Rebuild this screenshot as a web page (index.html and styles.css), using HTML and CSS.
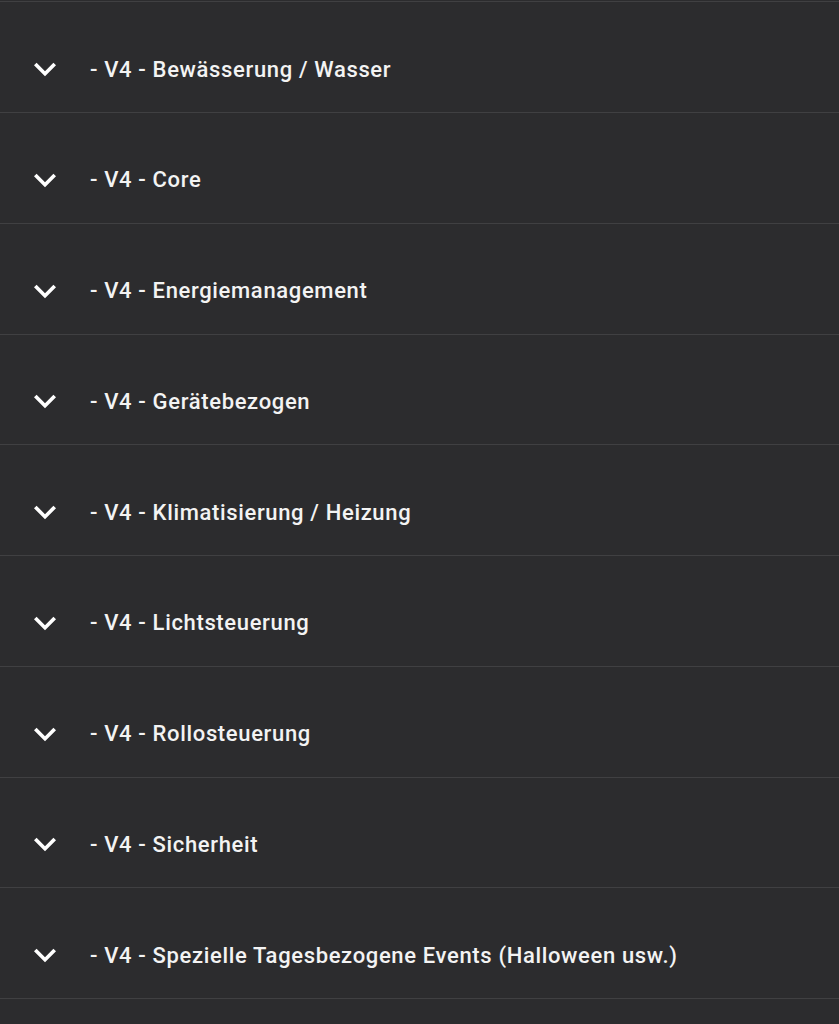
FILE: index.html
```html
<!DOCTYPE html>
<html lang="de">
<head>
<meta charset="utf-8">
<link rel="stylesheet" href="styles.css">
<title>V4</title>
</head>
<body>
<div class="list">
  <div class="row"><div class="head"><svg class="chev" viewBox="0 0 24 24"><path d="M16.59 8.59L12 13.17 7.41 8.59 6 10l6 6 6-6z"/></svg><span class="label">- V4 - Bewässerung / Wasser</span></div></div>
  <div class="row"><div class="head"><svg class="chev" viewBox="0 0 24 24"><path d="M16.59 8.59L12 13.17 7.41 8.59 6 10l6 6 6-6z"/></svg><span class="label">- V4 - Core</span></div></div>
  <div class="row"><div class="head"><svg class="chev" viewBox="0 0 24 24"><path d="M16.59 8.59L12 13.17 7.41 8.59 6 10l6 6 6-6z"/></svg><span class="label">- V4 - Energiemanagement</span></div></div>
  <div class="row"><div class="head"><svg class="chev" viewBox="0 0 24 24"><path d="M16.59 8.59L12 13.17 7.41 8.59 6 10l6 6 6-6z"/></svg><span class="label">- V4 - Gerätebezogen</span></div></div>
  <div class="row"><div class="head"><svg class="chev" viewBox="0 0 24 24"><path d="M16.59 8.59L12 13.17 7.41 8.59 6 10l6 6 6-6z"/></svg><span class="label">- V4 - Klimatisierung / Heizung</span></div></div>
  <div class="row"><div class="head"><svg class="chev" viewBox="0 0 24 24"><path d="M16.59 8.59L12 13.17 7.41 8.59 6 10l6 6 6-6z"/></svg><span class="label">- V4 - Lichtsteuerung</span></div></div>
  <div class="row"><div class="head"><svg class="chev" viewBox="0 0 24 24"><path d="M16.59 8.59L12 13.17 7.41 8.59 6 10l6 6 6-6z"/></svg><span class="label">- V4 - Rollosteuerung</span></div></div>
  <div class="row"><div class="head"><svg class="chev" viewBox="0 0 24 24"><path d="M16.59 8.59L12 13.17 7.41 8.59 6 10l6 6 6-6z"/></svg><span class="label">- V4 - Sicherheit</span></div></div>
  <div class="row"><div class="head"><svg class="chev" viewBox="0 0 24 24"><path d="M16.59 8.59L12 13.17 7.41 8.59 6 10l6 6 6-6z"/></svg><span class="label">- V4 - Spezielle Tagesbezogene Events (Halloween usw.)</span></div></div>
  <div class="row row-end"></div>
</div>
</body>
</html>
```
FILE: styles.css
```css
html, body {
  margin: 0;
  padding: 0;
  background: #2c2c2e;
  height: 100%;
  overflow: hidden;
}
body {
  font-family: Roboto, "Liberation Sans", sans-serif;
  color: #f3f3f3;
}
.list {
  padding-top: 1.3px;
}
.row {
  border-top: 1px solid #404042;
  padding-top: 23.78px;
  height: 86px;
}
.row-end {
  height: 0;
}
.head {
  height: 86px;
  display: flex;
  align-items: center;
  padding-left: 23px;
  gap: 23px;
}
.chev {
  width: 44px;
  height: 44px;
  fill: #ffffff;
  flex: none;
}
.label {
  font-size: 22px;
  font-weight: 500;
  letter-spacing: 0.65px;
  white-space: nowrap;
}
```
